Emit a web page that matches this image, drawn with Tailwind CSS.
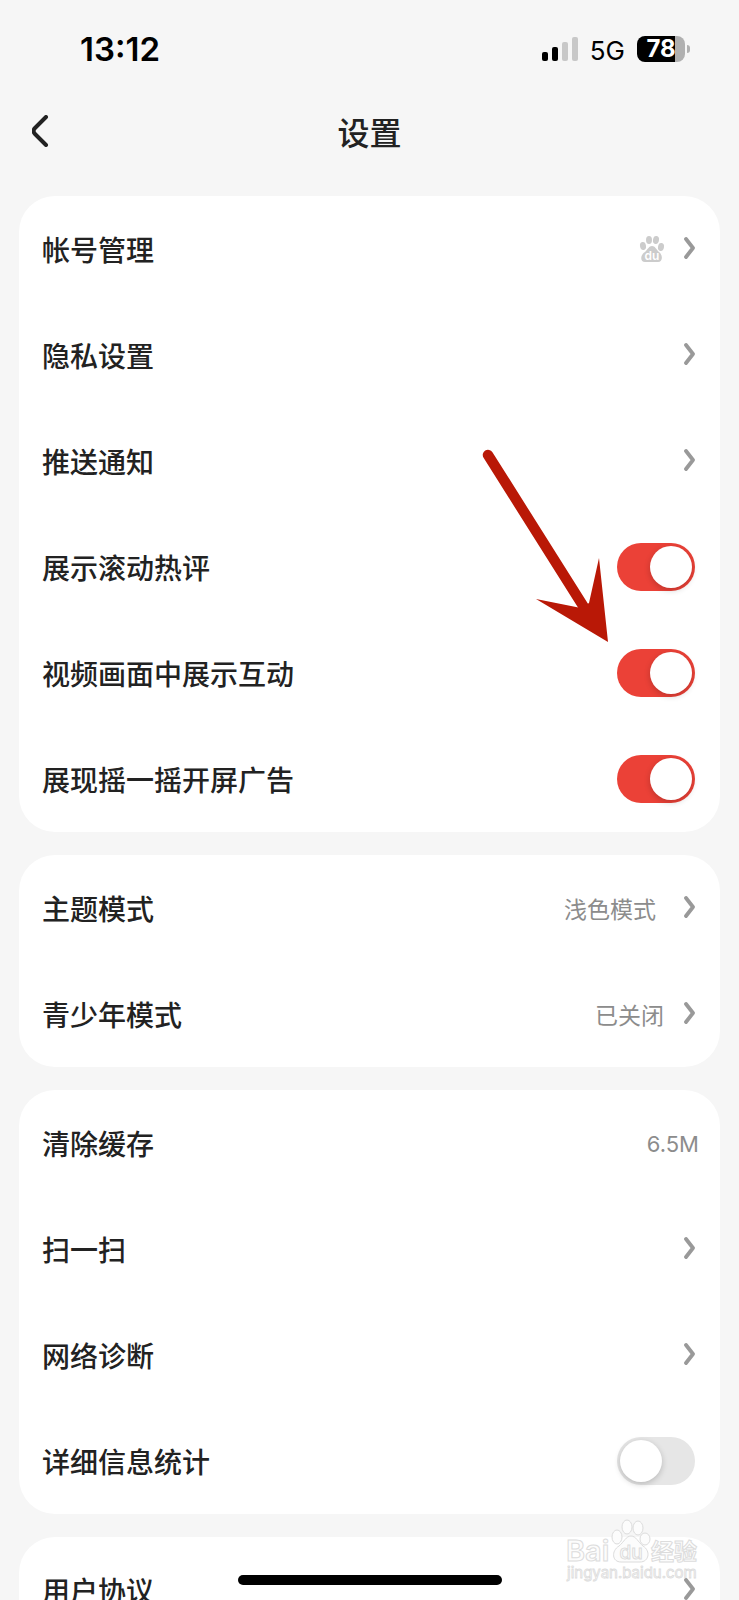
<!DOCTYPE html>
<html lang="zh-CN">
<head>
  <meta charset="UTF-8" />
  <meta name="viewport" content="width=device-width, initial-scale=1.0"/>
  <title>设置</title>
  <script src="https://cdn.jsdelivr.net/npm/@tailwindcss/browser@4"></script>
</head>
<body class="bg-[#f6f6f6] font-['Noto_Sans_CJK_SC',sans-serif] text-[#222222] antialiased">

  <!-- Icons used by the rows -->
  <svg class="hidden">
    <symbol id="chevron" viewBox="0 0 12 24">
      <path d="M3 2 L10 11 L3 20" fill="none" stroke="#999999" stroke-width="3.8" stroke-linecap="round" stroke-linejoin="round"/>
    </symbol>
  </svg>

  <div class="relative flex h-screen flex-col overflow-hidden">

    <!-- Status bar -->
    <div class="flex h-[98px] shrink-0 items-center justify-between pl-20 pr-[49px] font-['Inter',sans-serif] text-black">
      <span class="pt-[2px] text-[33px] font-semibold">13:12</span>
      <div class="flex items-center">
        <svg class="h-[26px] w-[38px]" viewBox="0 0 38 26">
          <rect x="0" y="16" width="6" height="9" rx="2"/>
          <rect x="10" y="11" width="6" height="14" rx="2"/>
          <rect x="20" y="6" width="6" height="19" rx="2" fill="#c8c8c8"/>
          <rect x="30" y="1" width="6" height="24" rx="2" fill="#c8c8c8"/>
        </svg>
        <span class="ml-[10px] pt-[2px] text-[26px]">5G</span>
        <div class="ml-3 flex h-[26px] w-12 items-center justify-center rounded-lg bg-linear-to-r from-black from-80% to-[#b0b0b0] to-80% text-2xl font-bold text-white">78</div>
        <span class="ml-[2px] h-2 w-[3px] rounded-r-full bg-[#b0b0b0]"></span>
      </div>
    </div>

    <!-- Header -->
    <header class="grid h-[66px] shrink-0 grid-cols-[1fr_auto_1fr] items-center px-7">
      <button type="button" aria-label="返回" class="flex h-12 w-8 items-center pl-1">
        <svg class="h-8 w-[18px]" viewBox="0 0 18 32">
          <path d="M14 2 L3 13 Q0 16 3 19 L14 30" fill="none" stroke="#222222" stroke-width="4" stroke-linecap="round"/>
        </svg>
      </button>
      <h1 class="text-[32px] leading-10 font-medium">设置</h1>
    </header>

    <main class="flex flex-col gap-[23px] px-[19px] pt-8">

      <section class="relative rounded-[36px] bg-white pl-[23px] pr-[25px] text-[28px] font-medium">
        <a href="#account" class="flex h-[106px] items-center justify-between">
          <span>帐号管理</span>
          <span class="flex items-center gap-[18px]">
            <svg class="h-7 w-[26px]" viewBox="0 0 26 28" fill="#cccccc">
              <ellipse cx="4" cy="11" rx="3" ry="4" transform="rotate(-10 4 11)"/>
              <ellipse cx="10" cy="5" rx="3" ry="4"/>
              <ellipse cx="17" cy="5" rx="3" ry="4" transform="rotate(10 17 5)"/>
              <ellipse cx="22" cy="12" rx="3" ry="4" transform="rotate(10 22 12)"/>
              <path d="M13 11 C16 11 17 14 20 17 C24 20 24 27 19 27 L6 27 C1 27 1 20 6 17 C9 14 10 11 13 11 Z"/>
              <text x="13" y="25" text-anchor="middle" font-family="Inter, sans-serif" font-size="12" font-weight="600" fill="#ffffff">du</text>
            </svg>
            <svg class="h-6 w-3"><use href="#chevron"/></svg>
          </span>
        </a>
        <a href="#privacy" class="flex h-[106px] items-center justify-between">
          <span>隐私设置</span>
          <svg class="h-6 w-3"><use href="#chevron"/></svg>
        </a>
        <a href="#push" class="flex h-[106px] items-center justify-between">
          <span>推送通知</span>
          <svg class="h-6 w-3"><use href="#chevron"/></svg>
        </a>
        <label class="flex h-[106px] items-center justify-between">
          <span>展示滚动热评</span>
          <input type="checkbox" role="switch" checked class="flex h-12 w-[78px] appearance-none items-center rounded-full bg-[#e6e6e6] p-[3px] before:size-[42px] before:rounded-full before:bg-white before:shadow-[0_2px_6px_rgba(0,0,0,0.2)] checked:justify-end checked:bg-[#eb4137]">
        </label>
        <label class="flex h-[106px] items-center justify-between">
          <span>视频画面中展示互动</span>
          <input type="checkbox" role="switch" checked class="flex h-12 w-[78px] appearance-none items-center rounded-full bg-[#e6e6e6] p-[3px] before:size-[42px] before:rounded-full before:bg-white before:shadow-[0_2px_6px_rgba(0,0,0,0.2)] checked:justify-end checked:bg-[#eb4137]">
        </label>
        <label class="flex h-[106px] items-center justify-between">
          <span>展现摇一摇开屏广告</span>
          <input type="checkbox" role="switch" checked class="flex h-12 w-[78px] appearance-none items-center rounded-full bg-[#e6e6e6] p-[3px] before:size-[42px] before:rounded-full before:bg-white before:shadow-[0_2px_6px_rgba(0,0,0,0.2)] checked:justify-end checked:bg-[#eb4137]">
        </label>

        <!-- Arrow pointing at the switch -->
        <svg class="pointer-events-none absolute top-[253px] right-[111px] h-[194px] w-[128px]" viewBox="0 0 128 194">
          <path d="M7 6 L106 163" stroke="#b91806" stroke-width="10.5" stroke-linecap="round"/>
          <path d="M127 193 L55 150 L100 159 L108 154 L118 109 Z" fill="#b91806"/>
        </svg>
      </section>

      <section class="rounded-[36px] bg-white pl-[23px] pr-[25px] text-[28px] font-medium">
        <a href="#theme" class="flex h-[106px] items-center justify-between">
          <span>主题模式</span>
          <span class="flex items-center gap-[27px]">
            <span class="text-[23px] font-normal text-[#8c8c8c]">浅色模式</span>
            <svg class="h-6 w-3"><use href="#chevron"/></svg>
          </span>
        </a>
        <a href="#teen" class="flex h-[106px] items-center justify-between">
          <span>青少年模式</span>
          <span class="flex items-center gap-[19px]">
            <span class="text-[23px] font-normal text-[#8c8c8c]">已关闭</span>
            <svg class="h-6 w-3"><use href="#chevron"/></svg>
          </span>
        </a>
      </section>

      <section class="rounded-[36px] bg-white pl-[23px] pr-[25px] text-[28px] font-medium">
        <button type="button" class="-mr-1 flex h-[106px] w-[calc(100%+4px)] items-center justify-between">
          <span>清除缓存</span>
          <span class="pt-[2px] font-['Inter',sans-serif] text-[22px] font-normal text-[#8c8c8c]">6.5M</span>
        </button>
        <a href="#scan" class="flex h-[106px] items-center justify-between">
          <span>扫一扫</span>
          <svg class="h-6 w-3"><use href="#chevron"/></svg>
        </a>
        <a href="#network" class="flex h-[106px] items-center justify-between">
          <span>网络诊断</span>
          <svg class="h-6 w-3"><use href="#chevron"/></svg>
        </a>
        <label class="flex h-[106px] items-center justify-between">
          <span>详细信息统计</span>
          <input type="checkbox" role="switch" class="flex h-12 w-[78px] appearance-none items-center rounded-full bg-[#e6e6e6] p-[3px] before:size-[42px] before:rounded-full before:bg-white before:shadow-[0_2px_6px_rgba(0,0,0,0.2)] checked:justify-end checked:bg-[#eb4137]">
        </label>
      </section>

      <section class="rounded-[36px] bg-white pl-[23px] pr-[25px] text-[28px] font-medium">
        <a href="#agreement" class="flex h-[106px] items-center justify-between">
          <span>用户协议</span>
          <svg class="relative z-10 h-6 w-3"><use href="#chevron"/></svg>
        </a>
      </section>
    </main>

    <!-- Watermark -->
    <svg class="pointer-events-none absolute right-[36px] bottom-[12px] h-[70px] w-[138px] font-['Inter','Noto_Sans_CJK_SC',sans-serif]" viewBox="0 0 138 70" fill="#fcfcfc" stroke="#dcdcdc" stroke-width="1">
      <text x="1" y="43" font-size="29" font-weight="600">Bai</text>
      <ellipse cx="52" cy="19" rx="5" ry="7"/>
      <ellipse cx="62" cy="9" rx="5" ry="7"/>
      <ellipse cx="73" cy="10" rx="5" ry="7"/>
      <ellipse cx="80" cy="21" rx="5" ry="6"/>
      <path d="M66 18 C71 18 73 24 78 28 C86 33 84 44 75 44 L56 44 C47 44 46 33 54 28 C59 24 61 18 66 18 Z"/>
      <text x="66" y="41" font-size="19" font-weight="500" text-anchor="middle">du</text>
      <text x="86" y="42" font-size="23" font-weight="700">经验</text>
      <text x="2" y="60" font-size="15" stroke-width="0.8">jingyan.baidu.com</text>
    </svg>

    <!-- Home indicator -->
    <div class="absolute bottom-[15px] left-1/2 z-20 h-[10px] w-[264px] -translate-x-1/2 rounded-full bg-black"></div>
  </div>

</body>
</html>
